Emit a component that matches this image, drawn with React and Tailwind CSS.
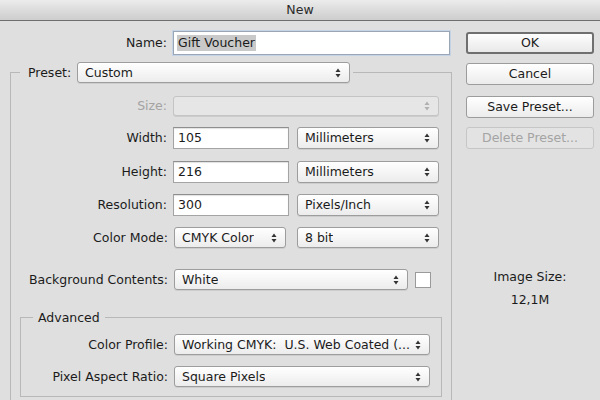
import React from "react";

const Arrows = ({ disabled }) => (
  <svg width="6" height="10" viewBox="0 0 6 10" className="shrink-0">
    <path d="M3 0.5 L5.5 4 L0.5 4 Z" fill={disabled ? "#b0b0b0" : "#333"} />
    <path d="M3 9.5 L5.5 6 L0.5 6 Z" fill={disabled ? "#b0b0b0" : "#333"} />
  </svg>
);

const Select = ({ w, h = "h-[21px]", children, disabled }) => (
  <div
    className={`${w} ${h} shrink-0 flex items-center justify-between pl-[7px] pr-[8px] rounded-[3px] border ${
      disabled ? "border-[#c4c4c4] bg-[#e6e6e6]" : "border-[#9d9d9d] bg-gradient-to-b from-[#ffffff] to-[#ececec]"
    } shadow-[0_1px_0_rgba(0,0,0,0.08)]`}
  >
    <span className="truncate">{children}</span>
    <Arrows disabled={disabled} />
  </div>
);

const Input = ({ value }) => (
  <div className="w-[116px] h-[22px] shrink-0 flex items-center pl-[4px] bg-white border border-[#a4a4a4] border-t-[#8e8e8e] shadow-[inset_0_1px_1px_rgba(0,0,0,0.12)]">
    {value}
  </div>
);

const Label = ({ w, children, disabled }) => (
  <div className={`${w} shrink-0 text-right pr-[6px] ${disabled ? "text-[#a3a3a3]" : ""}`}>{children}</div>
);

const Button = ({ children, mt, primary, disabled }) => (
  <div
    className={`${mt} w-[128px] h-[22px] flex items-center justify-center rounded-[3px] ${
      primary
        ? "border-2 border-[#6f6f6f] bg-gradient-to-b from-[#fdfdfd] to-[#e9e9e9]"
        : disabled
        ? "border border-[#c6c6c6] bg-[#e3e3e3] text-[#a4a4a4]"
        : "border border-[#9c9c9c] bg-gradient-to-b from-[#ffffff] to-[#ececec]"
    }`}
  >
    {children}
  </div>
);

export default function App() {
  return (
    <div
      className="w-[600px] h-[400px] overflow-hidden bg-[#dfdfdf] text-[#1b1b1b] text-[12.5px] leading-[16px]"
      style={{ fontFamily: '"DejaVu Sans", "Lucida Grande", sans-serif' }}
    >
      <div className="h-[21px] flex items-center justify-center bg-gradient-to-b from-[#ececec] to-[#cdcdcd] border-b border-[#6e6e6e] text-[#2a2a2a]">
        New
      </div>
      <div className="flex">
        {/* left column */}
        <div className="w-[453px] shrink-0">
          <div className="mt-[10px] flex items-center">
            <Label w="w-[173px]">Name:</Label>
            <div className="w-[277px] h-[24px] flex items-center pl-[3px] bg-white border border-[#9aa6b4] shadow-[0_0_0_1px_#c4d3e6]">
              <span className="bg-[#c9c9c9] px-[1px]">Gift Voucher</span>
            </div>
          </div>

          {/* Preset fieldset */}
          <div className="ml-[10px] w-[442px] h-[400px] mt-[17px] border border-b-0 border-[#b8b8b8]">
            <div className="-mt-[11px] ml-[9px] w-[333px] flex items-center bg-[#dfdfdf] pl-[8px]">
              <span className="w-[49px] shrink-0">Preset:</span>
              <Select w="w-[273px]">Custom</Select>
            </div>

            <div className="mt-[13px] flex items-center">
              <Label w="w-[162px]" disabled>Size:</Label>
              <Select w="w-[266px]" h="h-[20px]" disabled></Select>
            </div>

            <div className="mt-[11px] flex items-center">
              <Label w="w-[162px]">Width:</Label>
              <Input value="105" />
              <div className="ml-[8px]">
                <Select w="w-[142px]" h="h-[22px]">Millimeters</Select>
              </div>
            </div>

            <div className="mt-[12px] flex items-center">
              <Label w="w-[162px]">Height:</Label>
              <Input value="216" />
              <div className="ml-[8px]">
                <Select w="w-[142px]" h="h-[22px]">Millimeters</Select>
              </div>
            </div>

            <div className="mt-[11px] flex items-center">
              <Label w="w-[162px]">Resolution:</Label>
              <Input value="300" />
              <div className="ml-[8px]">
                <Select w="w-[142px]" h="h-[22px]">Pixels/Inch</Select>
              </div>
            </div>

            <div className="mt-[11px] flex items-center">
              <Label w="w-[163px]">Color Mode:</Label>
              <Select w="w-[112px]">CMYK Color</Select>
              <div className="ml-[11px]">
                <Select w="w-[142px]">8 bit</Select>
              </div>
            </div>

            <div className="mt-[21px] flex items-center">
              <Label w="w-[163px]">Background Contents:</Label>
              <Select w="w-[234px]">White</Select>
              <div className="ml-[7px] w-[16px] h-[16px] bg-white border border-[#9a9a9a]"></div>
            </div>

            {/* Advanced fieldset */}
            <div className="ml-[9px] w-[422px] mt-[27px] border border-[#b8b8b8] pb-[9px]">
              <div className="-mt-[8px] ml-[12px] w-fit px-[5px] bg-[#dfdfdf]">Advanced</div>
              <div className="mt-[8px] flex items-center">
                <Label w="w-[153px]">Color Profile:</Label>
                <Select w="w-[256px]">Working CMYK:&nbsp; U.S. Web Coated (...</Select>
              </div>
              <div className="mt-[11px] flex items-center">
                <Label w="w-[153px]">Pixel Aspect Ratio:</Label>
                <Select w="w-[256px]">Square Pixels</Select>
              </div>
            </div>
          </div>
        </div>

        {/* right column */}
        <div className="ml-[13px] flex flex-col">
          <Button mt="mt-[11px]" primary>OK</Button>
          <Button mt="mt-[9px]">Cancel</Button>
          <Button mt="mt-[11px]">Save Preset...</Button>
          <Button mt="mt-[9px]" disabled>Delete Preset...</Button>
          <div className="mt-[120px] text-center w-[128px]">Image Size:</div>
          <div className="mt-[7px] text-center w-[128px]">12,1M</div>
        </div>
      </div>
    </div>
  );
}
